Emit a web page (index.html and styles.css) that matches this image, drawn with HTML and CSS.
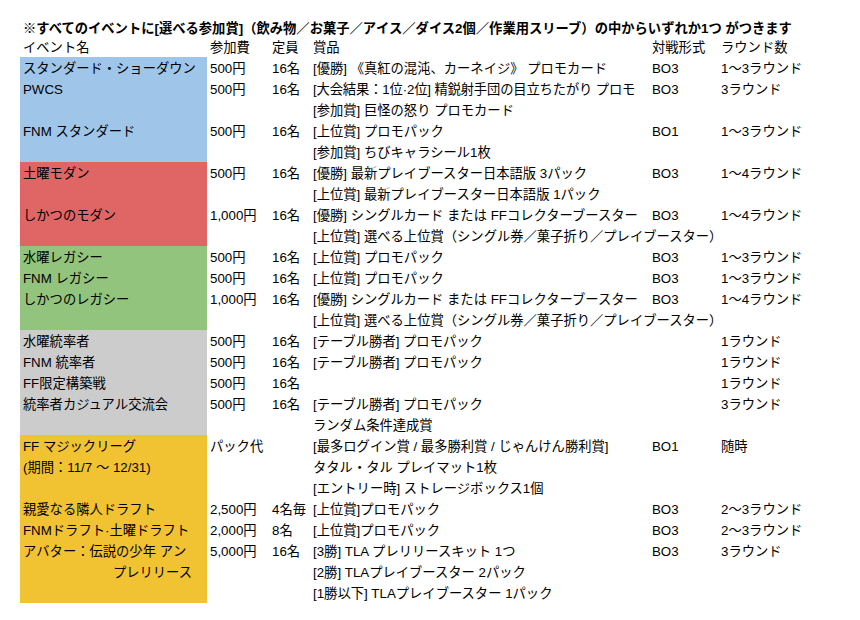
FILE: index.html
```html
<!DOCTYPE html>
<html lang="ja">
<head>
<meta charset="utf-8">
<title>イベント一覧</title>
<link rel="stylesheet" href="styles.css">
</head>
<body>
<div class="sheet">
<table class="events">
  <colgroup>
    <col class="c-name"><col class="c-fee"><col class="c-cap"><col class="c-prize"><col class="c-fmt"><col class="c-rnd">
  </colgroup>
  <tbody>
    <tr class="title"><td colspan="6">※すべてのイベントに[選べる参加賞]（飲み物／お菓子／アイス／ダイス2個／作業用スリーブ）の中からいずれか1つ がつきます</td></tr>
    <tr><td>イベント名</td><td>参加費</td><td>定員</td><td>賞品</td><td>対戦形式</td><td>ラウンド数</td></tr>

    <tr><td class="blue">スタンダード・ショーダウン</td><td>500円</td><td>16名</td><td>[優勝] 《真紅の混沌、カーネイジ》 プロモカード</td><td>BO3</td><td>1～3ラウンド</td></tr>
    <tr><td class="blue">PWCS</td><td>500円</td><td>16名</td><td class="clip"><div>[大会結果：1位·2位] 精鋭射手団の目立ちたがり プロモ</div></td><td>BO3</td><td>3ラウンド</td></tr>
    <tr><td class="blue"></td><td></td><td></td><td>[参加賞] 巨怪の怒り プロモカード</td><td></td><td></td></tr>
    <tr><td class="blue">FNM スタンダード</td><td>500円</td><td>16名</td><td>[上位賞] プロモパック</td><td>BO1</td><td>1～3ラウンド</td></tr>
    <tr><td class="blue"></td><td></td><td></td><td>[参加賞] ちびキャラシール1枚</td><td></td><td></td></tr>

    <tr><td class="red">土曜モダン</td><td>500円</td><td>16名</td><td>[優勝] 最新プレイブースター日本語版 3パック</td><td>BO3</td><td>1～4ラウンド</td></tr>
    <tr><td class="red"></td><td></td><td></td><td>[上位賞] 最新プレイブースター日本語版 1パック</td><td></td><td></td></tr>
    <tr><td class="red">しかつのモダン</td><td>1,000円</td><td>16名</td><td>[優勝] シングルカード または FFコレクターブースター</td><td>BO3</td><td>1～4ラウンド</td></tr>
    <tr><td class="red"></td><td></td><td></td><td>[上位賞] 選べる上位賞（シングル券／菓子折り／プレイブースター）</td><td></td><td></td></tr>

    <tr><td class="green">水曜レガシー</td><td>500円</td><td>16名</td><td>[上位賞] プロモパック</td><td>BO3</td><td>1～3ラウンド</td></tr>
    <tr><td class="green">FNM レガシー</td><td>500円</td><td>16名</td><td>[上位賞] プロモパック</td><td>BO3</td><td>1～3ラウンド</td></tr>
    <tr><td class="green">しかつのレガシー</td><td>1,000円</td><td>16名</td><td>[優勝] シングルカード または FFコレクターブースター</td><td>BO3</td><td>1～4ラウンド</td></tr>
    <tr><td class="green"></td><td></td><td></td><td>[上位賞] 選べる上位賞（シングル券／菓子折り／プレイブースター）</td><td></td><td></td></tr>

    <tr><td class="gray">水曜統率者</td><td>500円</td><td>16名</td><td>[テーブル勝者] プロモパック</td><td></td><td>1ラウンド</td></tr>
    <tr><td class="gray">FNM 統率者</td><td>500円</td><td>16名</td><td>[テーブル勝者] プロモパック</td><td></td><td>1ラウンド</td></tr>
    <tr><td class="gray">FF限定構築戦</td><td>500円</td><td>16名</td><td></td><td></td><td>1ラウンド</td></tr>
    <tr><td class="gray">統率者カジュアル交流会</td><td>500円</td><td>16名</td><td>[テーブル勝者] プロモパック</td><td></td><td>3ラウンド</td></tr>
    <tr><td class="gray"></td><td></td><td></td><td>ランダム条件達成賞</td><td></td><td></td></tr>

    <tr><td class="yellow">FF マジックリーグ</td><td>パック代</td><td></td><td>[最多ログイン賞 / 最多勝利賞 / じゃんけん勝利賞]</td><td>BO1</td><td>随時</td></tr>
    <tr><td class="yellow">(期間：11/7 ～ 12/31)</td><td></td><td></td><td>タタル・タル プレイマット1枚</td><td></td><td></td></tr>
    <tr><td class="yellow"></td><td></td><td></td><td>[エントリー時] ストレージボックス1個</td><td></td><td></td></tr>
    <tr><td class="yellow">親愛なる隣人ドラフト</td><td>2,500円</td><td>4名毎</td><td>[上位賞]プロモパック</td><td>BO3</td><td>2～3ラウンド</td></tr>
    <tr><td class="yellow">FNMドラフト·土曜ドラフト</td><td>2,000円</td><td>8名</td><td>[上位賞]プロモパック</td><td>BO3</td><td>2～3ラウンド</td></tr>
    <tr><td class="yellow">アバター：伝説の少年 アン</td><td>5,000円</td><td>16名</td><td>[3勝] TLA プレリリースキット 1つ</td><td>BO3</td><td>3ラウンド</td></tr>
    <tr><td class="yellow right">プレリリース</td><td></td><td></td><td>[2勝] TLAプレイブースター 2パック</td><td></td><td></td></tr>
    <tr><td class="yellow"></td><td></td><td></td><td>[1勝以下] TLAプレイブースター 1パック</td><td></td><td></td></tr>
  </tbody>
</table>
</div>
</body>
</html>
```
FILE: styles.css
```css
html, body {
  margin: 0;
  padding: 0;
  background: #ffffff;
}

.sheet {
  padding: 15px 20px;
}

.events {
  table-layout: fixed;
  border-collapse: collapse;
  border-spacing: 0;
  width: 820px;
  font-family: "Liberation Sans", "Noto Sans CJK JP", sans-serif;
  font-size: 13.3px;
  color: #000000;
}

.c-name { width: 187px; }
.c-fee { width: 62px; }
.c-cap { width: 41px; }
.c-prize { width: 339px; }
.c-fmt { width: 69px; }
.c-rnd { width: 122px; }

.events tr {
  height: 21px;
}

.events td {
  padding: 2px 3px 0;
  line-height: 19px;
  white-space: nowrap;
  vertical-align: top;
  overflow: visible;
}

.events .title td {
  font-weight: bold;
  padding-top: 6px;
  line-height: 15px;
}

.events td.clip div {
  overflow: hidden;
  letter-spacing: -0.15px;
}

.events td.right {
  text-align: right;
  padding-right: 15px;
}

.blue { background: #9fc5e8; }
.red { background: #e06666; }
.green { background: #93c47d; }
.gray { background: #cccccc; }
.yellow { background: #f1c232; }
```
